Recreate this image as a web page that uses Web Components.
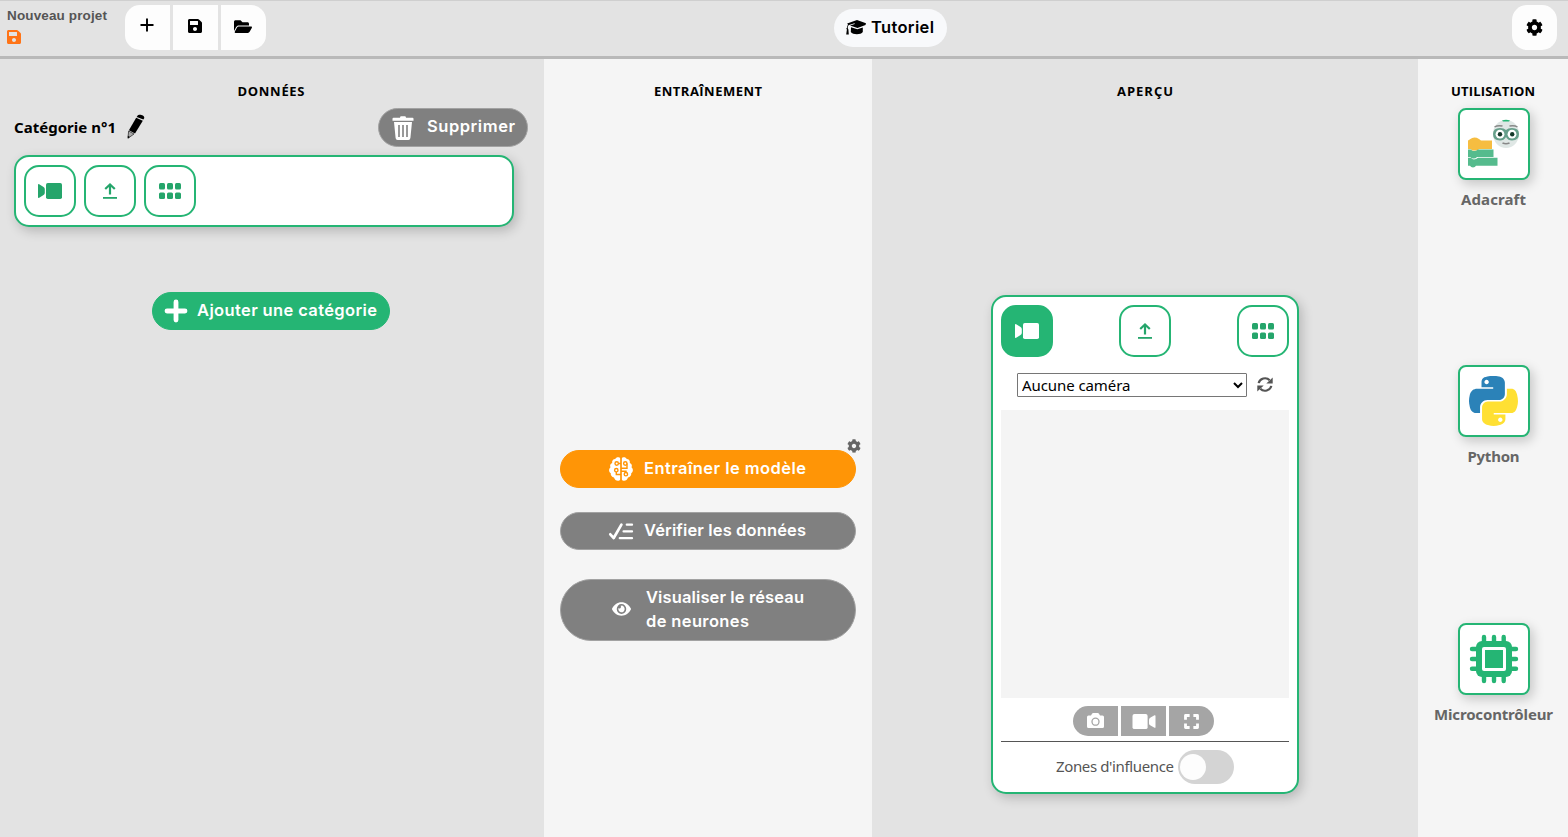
<!DOCTYPE html>
<html lang="fr"><head><meta charset="utf-8"><title>Nouveau projet</title>
<style>html,body{margin:0;height:100%;overflow:hidden}body{font-family:Inter,"Open Sans",sans-serif}</style></head>
<body><ml-app></ml-app>
<script>
const ICONS = {
 plus:['0 0 16 16','<path d="M8 1.500v13M1.500 8h13" stroke="currentColor" stroke-width="1.900"/>'],
 bigplus:['0 0 24 24','<path d="M12 3v18M3 12h18" stroke="currentColor" stroke-width="4.800" stroke-linecap="round"/>'],
 save:['0 32 448 448','<path d="M433.941 129.941l-83.882-83.882A48 48 0 0 0 316.118 32H48C21.49 32 0 53.49 0 80v352c0 26.51 21.49 48 48 48h352c26.51 0 48-21.49 48-48V163.882a48 48 0 0 0-14.059-33.941zM224 416c-35.346 0-64-28.654-64-64 0-35.346 28.654-64 64-64s64 28.654 64 64c0 35.346-28.654 64-64 64zm96-304.52V212c0 6.627-5.373 12-12 12H76c-6.627 0-12-5.373-12-12V108c0-6.627 5.373-12 12-12h228.52c3.183 0 6.235 1.264 8.485 3.515l3.48 3.48A11.996 11.996 0 0 1 320 111.48z"/>'],
 folder:['0 0 576 512','<path d="M572.694 292.093L500.27 416.248A63.997 63.997 0 0 1 444.989 448H45.025c-18.523 0-30.064-20.093-20.731-36.093l72.424-124.155A64 64 0 0 1 152 256h399.964c18.523 0 30.064 20.093 20.73 36.093zM152 224h328v-48c0-26.51-21.49-48-48-48H272l-64-64H48C21.49 64 0 85.49 0 112v278.046l69.077-118.418C86.214 242.25 117.989 224 152 224z"/>'],
 cog:['0 0 512 512','<path d="M487.4 315.7l-42.6-24.6c4.3-23.2 4.3-47 0-70.2l42.6-24.6c4.9-2.8 7.1-8.6 5.5-14-11.1-35.6-30-67.8-54.7-94.6-3.8-4.1-10-5.1-14.8-2.3L380.8 110c-17.9-15.4-38.5-27.3-60.8-35.1V25.8c0-5.6-3.9-10.5-9.4-11.7-36.7-8.2-74.3-7.8-109.2 0-5.5 1.2-9.4 6.1-9.4 11.7V75c-22.2 7.9-42.8 19.8-60.8 35.1L88.7 85.5c-4.9-2.8-11-1.9-14.8 2.3-24.7 26.7-43.6 58.9-54.7 94.6-1.7 5.4.6 11.2 5.5 14L67.3 221c-4.3 23.2-4.3 47 0 70.2l-42.6 24.6c-4.9 2.8-7.1 8.6-5.5 14 11.1 35.6 30 67.8 54.7 94.6 3.8 4.1 10 5.1 14.8 2.3l42.6-24.6c17.9 15.4 38.5 27.3 60.8 35.1v49.2c0 5.6 3.9 10.5 9.4 11.7 36.7 8.2 74.3 7.8 109.2 0 5.5-1.2 9.4-6.1 9.4-11.7v-49.2c22.2-7.9 42.8-19.8 60.8-35.1l42.6 24.6c4.9 2.8 11 1.9 14.8-2.3 24.7-26.7 43.6-58.9 54.7-94.6 1.5-5.5-.7-11.3-5.6-14.1zM256 336c-44.1 0-80-35.9-80-80s35.9-80 80-80 80 35.9 80 80-35.9 80-80 80z"/>'],
 cap:['0 0 20 15','<path d="M11 0L20 3.2 19.5 5 11.5 8 4 5.6 8.8 4 8.5 3.3 3 5C2 5.6 1.7 7 1.8 8.2L2.4 9.6 2.8 14.4H.2L.9 9.6C.2 8.9.3 8.2 1 7.8 1 6.5 1.4 5.5 2 4.8L1.2 3.6z"/><path d="M5 7.2L11.3 9.3 16.8 7.4V12C15 15 6.8 15 4.8 12z"/>'],
 pencil:['0 0 18 25','<path d="M10.5 1.7C11.5-.2 17.5.8 17.3 4L16.4 5.6 9.7 2.9z"/><path d="M9.2 3.8L15.8 6.7 8 19.4 1.9 16.2z"/><path d="M1.6 17L7 20 1 24.2z" fill="#aaa" stroke="#333" stroke-width=".8"/><path d="M.8 21.8L2.9 23 .8 24.5z"/>'],
 trash:['0 0 22 24','<path d="M8 1.7Q8 .3 9.3.3h3.4Q14 .3 14 1.7h6.5q1 0 1 1v2H.5v-2q0-1 1-1zM2 6h18l-1.600 16q-.2 2-2 2H5.600q-1.800 0-2-2z"/><path d="M7 9v12M11 9v12M15 9v12" stroke="#808080" stroke-width="1.600"/>'],
 camL:['0 0 24 16','<path d="M0 2Q0 .7 1.200 1.300L5.200 3.700Q6.800 4.500 6.800 6v4q0 1.500-1.600 2.300L1.200 14.700Q0 15.300 0 14z"/><rect x="8" width="16" height="16" rx="1.800"/>'],
 upload:['0 0 14 16','<path d="M7 11.500V2M2.200 6L7 1.400l4.800 4.600" fill="none" stroke="currentColor" stroke-width="2.200"/><path d="M0 14h14v1.800H0z"/>'],
 grid:['0 0 22 16','<rect width="6" height="6.400" rx="1.500"/><rect x="8" width="6" height="6.400" rx="1.500"/><rect x="16" width="6" height="6.400" rx="1.500"/><rect y="9.600" width="6" height="6.400" rx="1.500"/><rect x="8" y="9.600" width="6" height="6.400" rx="1.500"/><rect x="16" y="9.600" width="6" height="6.400" rx="1.500"/>'],
 brain:['0 0 24 24','<path d="M11.500 1.700C10.500-.3 7 0 6.300 2 4 2 2.700 4 3.200 5.900 1.300 6.600.6 8.600 1.500 10.200-.5 12-.3 15 1.700 16.100 1.500 18.500 3 20.400 5 20.600 5.800 24 10 25 11.500 22.200zM12.500 1.700C13.500-.3 17 0 17.700 2 20 2 21.300 4 20.800 5.900c1.900.7 2.600 2.700 1.700 4.300 2 1.800 1.800 4.800-.2 5.900.2 2.400-1.300 4.300-3.300 4.500-.8 3.400-5 4.400-6.500 1.600z"/><g fill="none" stroke="#ff9506" stroke-width="1.400"><circle cx="7.700" cy="6.500" r="1.700"/><circle cx="16.300" cy="6.500" r="1.700"/><circle cx="7.300" cy="13.200" r="1.700"/><circle cx="16.900" cy="17.200" r="1.700"/><path d="M9.400 6.500H12M7.300 14.900v2.600H12M18 6.500v4.800h-6M12 14.200h5v1.300M12 1v22"/></g>'],
 check:['0 0 24 17','<path d="M1.300 11.300L4.700 15 12.400 1.600" fill="none" stroke="currentColor" stroke-width="2.700" stroke-linecap="round" stroke-linejoin="round"/><path d="M17.800 1.700H23M14.600 8.400H23M10.800 15.200H23" stroke="currentColor" stroke-width="2.300" stroke-linecap="round"/>'],
 eye:['0 0 576 512','<path d="M572.52 241.4C518.29 135.59 410.93 64 288 64S57.68 135.64 3.48 241.41a32.35 32.35 0 0 0 0 29.19C57.71 376.41 165.07 448 288 448s230.32-71.64 284.52-177.41a32.35 32.35 0 0 0 0-29.19zM288 400a144 144 0 1 1 144-144 143.93 143.93 0 0 1-144 144zm0-240a95.31 95.31 0 0 0-25.31 3.79 47.85 47.85 0 0 1-66.9 66.9A95.78 95.78 0 1 0 288 160z"/>'],
 refresh:['0 0 16 16','<path d="M1.700 6.600A6.400 6.400 0 0 1 12.700 3.400M14.300 9.400A6.400 6.400 0 0 1 3.300 12.600" fill="none" stroke="currentColor" stroke-width="2.200"/><path d="M15.700.6v6.400H9.300zM.3 15.400V9h6.400z"/>'],
 photo:['0 0 17 16','<path d="M1.500 2.500H4L5 .8Q5.400 0 6.300 0h4.400q.9 0 1.300.8l1 1.700h2.500Q17 2.500 17 4v9.500q0 1.500-1.500 1.500h-14Q0 15 0 13.500V4Q0 2.500 1.500 2.500z"/><circle cx="8.500" cy="8.700" r="3.500" fill="none" stroke="#a5a5a5" stroke-width="1.300"/>'],
 camR:['0 0 24 16','<path d="M23.500 2Q23.500.9 22.500 1.400L18.600 3.700Q17 4.500 17 6v4q0 1.500 1.600 2.300l3.900 2.300q1 .5 1-.6z"/><rect x=".5" width="15.100" height="16" rx="2"/>'],
 expand:['0 0 16 16','<path d="M1.600 6V1.600H6M10 1.600h4.400V6M14.400 10v4.400H10M6 14.400H1.600V10" fill="none" stroke="currentColor" stroke-width="3" stroke-linejoin="round"/>'],
 python:['0 32 448 448','<path fill="#ffe033" d="M439.8 200.5c-7.7-30.9-22.3-54.2-53.4-54.2h-40.1v47.4c0 36.8-31.2 67.8-66.8 67.8H172.7c-29.2 0-53.4 25-53.4 54.3v101.8c0 29 25.2 46 53.4 54.3 33.8 9.9 66.3 11.7 106.8 0 26.9-7.8 53.4-23.5 53.4-54.3v-40.7H226.2v-13.6h160.2c31.1 0 42.6-21.7 53.4-54.2 11.2-33.5 10.7-65.7 0-108.6zM286.2 404c11.1 0 20.1 9.1 20.1 20.3 0 11.3-9 20.4-20.1 20.4-11 0-20.1-9.2-20.1-20.4.1-11.3 9.1-20.3 20.1-20.3z"/><path fill="#2b82b8" d="M167.8 248.1h106.8c29.7 0 53.4-24.5 53.4-54.3V91.9c0-29-24.4-50.7-53.4-55.6-35.8-5.9-74.7-5.6-106.8.1-45.2 8-53.4 24.7-53.4 55.6v40.7h106.9v13.6h-147c-31.1 0-58.3 18.7-66.8 54.2-9.8 40.7-10.2 66.1 0 108.6 7.6 31.6 25.7 54.2 56.8 54.2H101v-48.8c0-35.3 30.5-66.4 66.8-66.4zm-6.7-142.6c-11.1 0-20.1-9.1-20.1-20.3.1-11.3 9-20.4 20.1-20.4 11 0 20.1 9.2 20.1 20.4s-9 20.3-20.1 20.3z"/>'],
 chip:['0 0 48 48','<g fill="#25b574"><path d="M14 2v44M24 2v44M33.700 2v44M2 14h44M2 24h44M2 33.700h44" stroke="#25b574" stroke-width="4.400" stroke-linecap="round"/><rect x="6" y="6" width="36" height="36" rx="6"/><rect x="12" y="12" width="24" height="24" rx="2" fill="#fff"/><rect x="15" y="15" width="18" height="18"/></g>'],
 ada:['0 0 54 50','<path d="M1 22q0-1 1-1l1-.7Q7 17 12 20l2 1.500H25V30H12q-1 1.500-3 1.500H6q-2 0-2-1.500H1z" fill="#f6bd41"/><path d="M1 30.600h3q1 1.500 3 1.500t4-1.500h15.500V38H10q-1 1.600-3.500 1.600T3.500 38H1z" fill="#55bb8d"/><path d="M1 38.800h3q1 1.600 3 1.600t4-1.600h19.500v8H9q-1 1.600-3 1.600t-3-1.600H1z" fill="#55bb8d"/><ellipse cx="39" cy="15" rx="13" ry="14" fill="#dfe7e5"/><path d="M35 1.500q4-1.300 8 0l-1 1h-6z" fill="#25b574"/><path d="M26 15q0-6 7-6 4 0 6 2 2-2 6-2 7 0 7 6t-7 6.500q-4 0-6-3.500-2 3.500-6 3.500-7 0-7-6.500z" fill="#679f8b"/><circle cx="33" cy="15.200" r="4.400" fill="#fff"/><circle cx="45" cy="15.200" r="4.400" fill="#fff"/><circle cx="33" cy="15.200" r="2.200" fill="#15382a"/><circle cx="45.200" cy="15.200" r="2.200" fill="#15382a"/><path d="M27.500 8q3-2 8-1M42.500 7q5-1 8 1" fill="none" stroke="#888" stroke-width="1.500"/><path d="M35.500 24q3.500 1.500 7 0" fill="none" stroke="#888" stroke-width="1.700"/>']
};
class UiIcon extends HTMLElement{
 connectedCallback(){
  const [vb,body]=ICONS[this.getAttribute('name')],w=this.getAttribute('w'),h=this.getAttribute('h')||w;
  this.attachShadow({mode:'open'}).innerHTML=`<style>:host{display:block;flex:none;width:${w}px;height:${h}px}svg{display:block;width:100%;height:100%;fill:currentColor;overflow:visible}</style><svg viewBox="${vb}" preserveAspectRatio="none">${body}</svg>`;
 }
}
/* Spreads a label's letters so that it takes a fixed width. */
class FitText extends HTMLElement{
 connectedCallback(){
  const w=+this.getAttribute('w');
  this.attachShadow({mode:'open'}).innerHTML=`<style>:host{display:block;flex:none;width:${w}px;white-space:nowrap}span{display:inline-block}</style><span><slot></slot></span>`;
  const s=this.shadowRoot.querySelector('span');
  const n=this.textContent.length;
  s.style.letterSpacing=((w-s.getBoundingClientRect().width)/(n-1)).toFixed(3)+'px';
 }
}
class PillButton extends HTMLElement{
 constructor(){super();this.attachShadow({mode:'open'}).innerHTML=`<style>:host{display:flex;align-items:center;box-sizing:border-box;height:38px;border-radius:31px;background:#808080;border:1px solid #a2a2a2;color:#fff;font:600 16.5px/24px Inter,sans-serif}:host([tone=green]){background:#25b574;border-color:#25b574}:host([tone=orange]){background:#ff9506;border-color:#ff9506}::slotted(:not(ui-icon)){margin-bottom:2px}</style><slot name="icon"></slot><slot></slot>`}
}
class SourceButton extends HTMLElement{
 connectedCallback(){this.attachShadow({mode:'open'}).innerHTML=`<style>:host{display:flex;align-items:center;justify-content:center;box-sizing:border-box;width:52px;height:52px;border:2px solid #25b574;border-radius:15px;background:#fff;color:#25a56b}:host([active]){background:#25b574;color:#fff}</style><slot></slot>`}
}
class ExportCard extends HTMLElement{
 connectedCallback(){this.attachShadow({mode:'open'}).innerHTML=`<style>:host{display:flex;flex-direction:column;align-items:center;color:#666;font:700 15px/20px "Noto Sans",sans-serif}div{display:flex;align-items:center;justify-content:center;box-sizing:border-box;width:72px;height:72px;border:2px solid #25b574;border-radius:8px;background:#fff;box-shadow:3px 4px 12px #0003;margin-bottom:9px}</style><div><slot name="icon"></slot></div><slot></slot>`}
}
class ButtonGroup extends HTMLElement{
 connectedCallback(){this.attachShadow({mode:'open'}).innerHTML=`<style>:host{display:flex;gap:3px}::slotted(*){width:45px;height:var(--h);background:var(--bg);display:flex;align-items:center;justify-content:center}::slotted(:first-child){border-radius:var(--r) 0 0 var(--r)}::slotted(:last-child){border-radius:0 var(--r) var(--r) 0}</style><slot></slot>`}
}
class TopBar extends HTMLElement{
 connectedCallback(){this.attachShadow({mode:'open'}).innerHTML=`<style>
 :host{display:flex;box-sizing:border-box;height:59px;background:#e3e3e3;border-top:1px solid #cfcfcf;border-bottom:3px solid #b9b9b9;align-items:flex-start}
 .name{width:118px;padding:6px 0 0 7px;box-sizing:border-box;font:700 13.5px/18px "Liberation Sans",sans-serif;color:#555}
 .name ui-icon{color:#ff7417;margin-top:5px}
 button-group{--h:45px;--bg:#fdfdfd;--r:15px;margin:4px 0 0 7px}button-group ui-icon{margin-right:2px;margin-bottom:3px}
 .tut{margin:8px 0 0 568px;width:113px;height:38px;box-sizing:border-box;border-radius:19px;background:#f8f9fb;display:flex;align-items:center;padding:0 0 2px 12px;gap:5px;font:600 16.5px/24px Inter,sans-serif}
 .gear{margin:4px 11px 0 auto;width:45px;height:45px;border-radius:15px;background:#fdfdfd;display:flex;align-items:center;justify-content:center}
 </style><div class="name"><fit-text w="100">Nouveau projet</fit-text><ui-icon name="save" w="14"></ui-icon></div>
 <button-group><div><ui-icon name="plus" w="16" style="margin-bottom:5px"></ui-icon></div><div><ui-icon name="save" w="14"></ui-icon></div><div><ui-icon name="folder" w="18" h="17"></ui-icon></div></button-group>
 <div class="tut"><ui-icon name="cap" w="20" h="15"></ui-icon><fit-text w="63">Tutoriel</fit-text></div>
 <div class="gear"><ui-icon name="cog" w="17" style="margin:0 1px 1px 0"></ui-icon></div>`}
}
const TITLE='h2{margin:0;height:18px;display:flex;justify-content:center;font:700 13px/18px "Open Sans",sans-serif;color:#000}';
class DataPanel extends HTMLElement{
 connectedCallback(){this.attachShadow({mode:'open'}).innerHTML=`<style>:host{display:flex;flex-direction:column;box-sizing:border-box;padding:23px 16px 0 14px;background:#e3e3e3}${TITLE}
 .row{display:flex;align-items:center;height:39px;margin-top:8px;font:700 15px/20px "Noto Sans",sans-serif}.row>fit-text,.row>ui-icon{margin-bottom:2px}.row pill-button{margin-left:auto;width:150px;height:39px}.row pill-button fit-text{margin-bottom:4px}
 .box{width:500px;height:72px;box-sizing:border-box;margin-top:8px;padding:8px;display:flex;gap:8px;border:2px solid #25b574;border-radius:15px;background:#fff;box-shadow:3px 4px 12px #0003}
 .add{width:238px;margin:65px 0 0 138px}</style><h2><fit-text w="67">DONNÉES</fit-text></h2>
 <div class="row"><fit-text w="102">Catégorie n°1</fit-text><ui-icon name="pencil" w="18" h="25" style="margin-left:11px"></ui-icon>
 <pill-button><ui-icon slot="icon" name="trash" w="22" h="24" style="margin:1px 13px 0 13px"></ui-icon><fit-text w="88">Supprimer</fit-text></pill-button></div>
 <div class="box"><source-button><ui-icon name="camL" w="24" h="16"></ui-icon></source-button><source-button><ui-icon name="upload" w="14" h="16"></ui-icon></source-button><source-button><ui-icon name="grid" w="22" h="16"></ui-icon></source-button></div>
 <pill-button class="add" tone="green"><ui-icon slot="icon" name="bigplus" w="24" style="margin:0 9px 0 11px"></ui-icon><fit-text w="180">Ajouter une catégorie</fit-text></pill-button>`}
}
class TrainPanel extends HTMLElement{
 connectedCallback(){this.attachShadow({mode:'open'}).innerHTML=`<style>:host{display:flex;flex-direction:column;box-sizing:border-box;padding:23px 16px 0;background:#f5f5f5}${TITLE}
 .train{position:relative;margin-top:350px}.cog{position:absolute;right:-5px;top:-11px;color:#666}pill-button ui-icon{margin:0 11px 0 48px}</style>
 <h2><fit-text w="108">ENTRAÎNEMENT</fit-text></h2>
 <div class="train"><pill-button tone="orange"><ui-icon slot="icon" name="brain" w="24"></ui-icon><fit-text w="162">Entraîner le modèle</fit-text></pill-button><ui-icon class="cog" name="cog" w="14"></ui-icon></div>
 <pill-button style="margin-top:24px"><ui-icon slot="icon" name="check" w="24" h="17"></ui-icon><fit-text w="162">Vérifier les données</fit-text></pill-button>
 <pill-button style="height:62px;margin-top:29px"><ui-icon slot="icon" name="eye" w="19" h="18" style="margin:0 15px 2px 51px"></ui-icon><div><fit-text w="158">Visualiser le réseau</fit-text><fit-text w="103">de neurones</fit-text></div></pill-button>`}
}
class PreviewPanel extends HTMLElement{
 connectedCallback(){this.attachShadow({mode:'open'}).innerHTML=`<style>:host{display:flex;flex-direction:column;align-items:center;box-sizing:border-box;padding-top:23px;background:#e3e3e3}${TITLE}
 .card{box-sizing:border-box;width:308px;height:499px;margin-top:195px;padding:8px;border:2px solid #25b574;border-radius:15px;background:#fff;box-shadow:3px 4px 12px #0003}
 .src{display:flex;justify-content:space-between}.sel{display:flex;align-items:center;gap:10px;margin:16px 0 13px 16px;color:#555}
 select{box-sizing:border-box;width:230px;height:24px;margin:0;padding:0 0 2px;font:15px "Noto Sans",sans-serif;letter-spacing:-.08px;color:#000;background:#fff;border:1px solid #767676;border-radius:1px}
 .view{height:288px;background:#f4f4f4}button-group{--h:30px;--bg:#a5a5a5;--r:15px;color:#fff;margin:8px 0 5px 72px}
 .zone{border-top:1px solid #555;padding:8px 0 0 55px;display:flex;align-items:center;gap:4px;font:15px/20px "Noto Sans",sans-serif;color:#555}.zone fit-text{margin-bottom:2px}
 .toggle{width:56px;height:34px;border-radius:17px;background:#d4d4d4;display:flex;align-items:center;padding-left:2px;box-sizing:border-box}.toggle i{width:26px;height:26px;border-radius:50%;background:#fdfdfd}</style>
 <h2><fit-text w="56">APERÇU</fit-text></h2><div class="card"><div class="src"><source-button active><ui-icon name="camL" w="24" h="16"></ui-icon></source-button><source-button><ui-icon name="upload" w="14" h="16"></ui-icon></source-button><source-button><ui-icon name="grid" w="22" h="16"></ui-icon></source-button></div>
 <div class="sel"><select><option>Aucune caméra</option></select><ui-icon name="refresh" w="16" h="15" style="margin-bottom:2px"></ui-icon></div><div class="view"></div>
 <button-group><div><ui-icon name="photo" w="17" h="16"></ui-icon></div><div><ui-icon name="camR" w="24" h="15"></ui-icon></div><div><ui-icon name="expand" w="15"></ui-icon></div></button-group>
 <div class="zone"><fit-text w="118">Zones d'influence</fit-text><div class="toggle"><i></i></div></div></div>`}
}
class UsePanel extends HTMLElement{
 connectedCallback(){this.attachShadow({mode:'open'}).innerHTML=`<style>:host{display:flex;flex-direction:column;align-items:stretch;box-sizing:border-box;padding-top:23px;background:#f5f5f5}${TITLE}export-card{height:102px;margin-left:1px}</style>
 <h2><fit-text w="84">UTILISATION</fit-text></h2>
 <export-card style="margin-top:8px"><ui-icon slot="icon" name="ada" w="54" h="50"></ui-icon><fit-text w="65">Adacraft</fit-text></export-card>
 <export-card style="margin-top:155px"><ui-icon slot="icon" name="python" w="49" h="50"></ui-icon><fit-text w="52">Python</fit-text></export-card>
 <export-card style="margin-top:156px"><ui-icon slot="icon" name="chip" w="48"></ui-icon><fit-text w="119">Microcontrôleur</fit-text></export-card>`}
}
class MlApp extends HTMLElement{
 connectedCallback(){this.attachShadow({mode:'open'}).innerHTML=`<style>:host{display:grid;grid-template:59px 1fr/544px 328px 546px 1fr;height:100vh}top-bar{grid-column:1/-1}</style><top-bar></top-bar><data-panel></data-panel><train-panel></train-panel><preview-panel></preview-panel><use-panel></use-panel>`}
}
for(const [n,c] of Object.entries({'ui-icon':UiIcon,'pill-button':PillButton,'source-button':SourceButton,'export-card':ExportCard,'button-group':ButtonGroup,'fit-text':FitText,'top-bar':TopBar,'data-panel':DataPanel,'train-panel':TrainPanel,'preview-panel':PreviewPanel,'use-panel':UsePanel,'ml-app':MlApp}))customElements.define(n,c);
</script></body></html>
